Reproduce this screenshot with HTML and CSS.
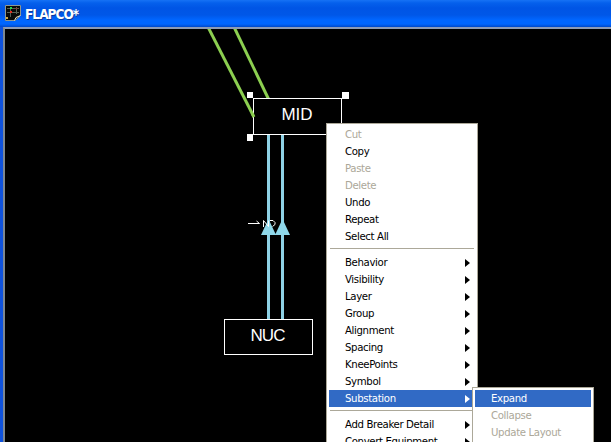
FILE: index.html
```html
<!DOCTYPE html>
<html lang="en">
<head>
<meta charset="utf-8">
<title>FLAPCO*</title>
<link rel="stylesheet" href="styles.css">
</head>
<body>
<div class="desktop">
<div class="window">
  <header class="titlebar">
    <svg class="app-icon" width="17" height="17" viewBox="0 0 17 17">
      <path d="M.5 .5H15.5V10.5L10 15.5H.5Z" fill="#080a08" stroke="#8f978f"/>
      <path d="M9.5 15.5L11 12.5L15.5 10.5" fill="none" stroke="#e8e4c8"/>
      <path d="M2 3.5H14M2 7.5H14M5.5 2V12M11.5 2V9" stroke="#566052" fill="none"/>
      <path d="M5 2h2v2H5z" fill="#20d850"/>
      <path d="M5 6h2v2H5z" fill="#e02c20"/>
      <path d="M10 3h3v1h-3z" fill="#7b3b30"/>
      <path d="M1 12h2v2H1z" fill="#d0a840"/>
    </svg>
    <h1 class="title">FLAPCO*</h1>
  </header>
  <main class="canvas">
    <svg class="diagram" width="606" height="413" viewBox="5 29 606 413">
      <g class="line-green">
        <path d="M208.500 28L254 117"/>
        <path d="M234.500 28L268.500 99"/>
      </g>
      <g class="line-blue">
        <path d="M268.5 135V319M282.5 135V319"/>
      </g>
      <path class="arrow" d="M268.5 219L276 235H261ZM282.5 219L290 235H275Z"/>
      <path class="flow" d="M248 223.500H259.500L256.500 221M263.500 227V220.500L268.500 226.500V220.500M270 220.500H273L275 222.500V224.500L272.500 226.500"/>
      <g class="node">
        <rect x="253.5" y="98.5" width="88" height="36"/>
        <rect x="224.5" y="319.5" width="88" height="35"/>
      </g>
      <path class="line-green" d="M252 113L254 117"/>
      <path class="handle" d="M247 92h6v6h-6zM342 92h7v7h-7zM247 134h6v7h-6z"/>
      <text class="label" x="281.5" y="120" textLength="31">MID</text>
      <text class="label" x="250.5" y="341" textLength="35">NUC</text>
    </svg>
  </main>
</div>
<ul class="menu main-menu">
  <li class="off">Cut</li>
  <li>Copy</li>
  <li class="off">Paste</li>
  <li class="off">Delete</li>
  <li>Undo</li>
  <li>Repeat</li>
  <li>Select All</li>
  <li class="sep"></li>
  <li class="more">Behavior</li>
  <li class="more">Visibility</li>
  <li class="more">Layer</li>
  <li class="more">Group</li>
  <li class="more">Alignment</li>
  <li class="more">Spacing</li>
  <li class="more">KneePoints</li>
  <li class="more">Symbol</li>
  <li class="more active">Substation</li>
  <li class="sep"></li>
  <li class="more">Add Breaker Detail</li>
  <li class="more">Convert Equipment</li>
</ul>
<ul class="menu sub-menu">
  <li class="active">Expand</li>
  <li class="off">Collapse</li>
  <li class="off">Update Layout</li>
</ul>
</div>
</body>
</html>
```
FILE: styles.css
```css
* { box-sizing: border-box; }
body { margin: 0; background: #000; }
.desktop {
  width: 611px;
  height: 442px;
  overflow: hidden;
  position: relative;
}
.window {
  height: 442px;
  display: flex;
  flex-direction: column;
  background: #0f52dc;
}
.titlebar {
  height: 27px;
  flex: none;
  display: flex;
  align-items: flex-start;
  padding: 5px 0 0 5px;
  gap: 3px;
  background: linear-gradient(#1672f5 0, #0560ec 3px, #0055e5 8px, #0057e8 15px, #0066ff 20px, #0066ff 24px, #0048c8 27px);
}
.app-icon { display: block; flex: none; }
.title {
  margin: 0;
  font: bold 13.5px/19px "DejaVu Sans Condensed", "DejaVu Sans", sans-serif;
  letter-spacing: -0.95px;
  color: #fff;
  text-shadow: 1px 1px 0 #0c3a9c;
}
.canvas {
  flex: 1;
  min-height: 0;
  margin-left: 3px;
  border-left: 2px solid #7d8790;
  border-top: 2px solid #8d9bb5;
  background: #000;
}
.diagram { display: block; }
.line-green { fill: none; stroke: #8ccf50; stroke-width: 3; }
.line-blue { fill: none; stroke: #8fd2e6; stroke-width: 3; }
.arrow { fill: #8fd8ea; }
.flow { fill: none; stroke: #fff; stroke-width: 1; }
.node rect { fill: #000; stroke: #fff; stroke-width: 1; }
.handle { fill: #fff; }
.label {
  font: 17px "Liberation Sans", sans-serif;
  fill: #fff;
}
.menu {
  position: absolute;
  margin: 0;
  padding: 2px;
  list-style: none;
  background: #fff;
  border: 1px solid #aca899;
  font: 11.3px/17px "DejaVu Sans Condensed", "DejaVu Sans", sans-serif;
  letter-spacing: -0.36px;
  color: #000;
}
.main-menu { left: 326px; top: 123px; width: 152px; height: 319px; border-bottom: 0; padding-bottom: 0; overflow: hidden; }
.sub-menu { left: 472px; top: 387px; width: 122px; height: 55px; border-bottom: 0; padding-bottom: 0; }
.menu li {
  height: 17px;
  padding: 0 5px 0 16px;
  display: flex;
  justify-content: space-between;
  align-items: center;
  white-space: nowrap;
}
.menu .off { color: #aca899; }
.menu .active { background: #316ac5; color: #fff; }
.more::after {
  content: "";
  border-left: 5px solid currentColor;
  border-top: 4px solid transparent;
  border-bottom: 4px solid transparent;
}
.menu .sep {
  height: 9px;
  padding: 3px 1px 0;
}
.sep::before {
  content: "";
  align-self: flex-start;
  width: 100%;
  height: 1px;
  background: #aca899;
}
```
